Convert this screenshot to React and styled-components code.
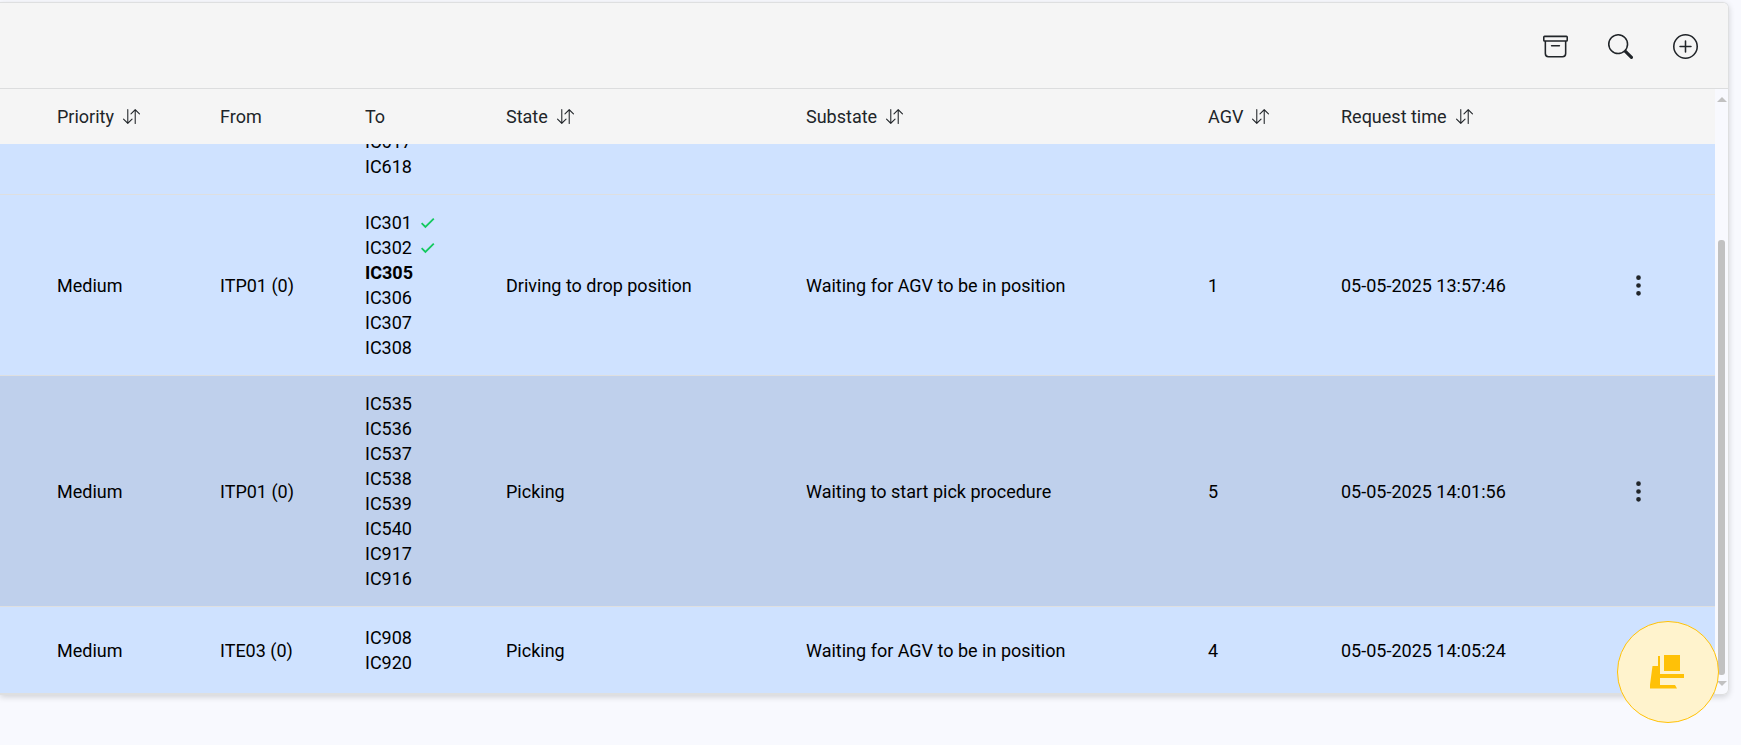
import React from "react";
import styled, { createGlobalStyle } from "styled-components";
import { BsArchive, BsSearch, BsPlusCircle, BsArrowDownUp, BsThreeDotsVertical } from "react-icons/bs";

const GlobalStyle = createGlobalStyle`
  *, *::before, *::after { box-sizing: border-box; }
  body {
    margin: 0;
    background: #f8f9fe;
    color: #212529;
    font-family: Roboto, "Liberation Sans", sans-serif;
    font-size: 18px;
    line-height: 25px;
  }
`;

const Page = styled.main`
  height: 100vh;
  padding: 2px 12px 50px 0;
  overflow: hidden;
`;

const Card = styled.section`
  display: flex;
  flex-direction: column;
  height: 100%;
  border: 1px solid #dedfe0;
  border-left: 0;
  border-radius: 0 6px 6px 0;
  box-shadow: 0 2px 6px rgba(0, 0, 0, 0.16);
  overflow: hidden;
`;

const Toolbar = styled.header`
  display: flex;
  justify-content: flex-end;
  align-items: center;
  flex: none;
  height: 86px;
  padding: 2px 10px 0 0;
  background: #f5f5f5;
  border-bottom: 1px solid #dcddde;
`;

const ToolButton = styled.button`
  display: flex;
  padding: 20px;
  border: 0;
  background: none;
  color: #212529;
  font-size: 25px;
  cursor: pointer;
`;

const Body = styled.div`
  display: flex;
  flex: 1;
  min-height: 0;
`;

const Viewport = styled.div`
  flex: 1;
  min-width: 0;
  overflow: hidden;
`;

const Table = styled.table`
  width: 100%;
  table-layout: fixed;
  border-collapse: separate;
  border-spacing: 0;
`;

const Col = styled.col`
  width: ${(p) => p.$width};
`;

const HeadCell = styled.th`
  position: sticky;
  top: 0;
  z-index: 1;
  height: 55px;
  padding: 0 0 0 57px;
  background: #f5f5f5;
  font-weight: 400;
  text-align: left;
  white-space: nowrap;
`;

const SortButton = styled.button`
  display: inline-flex;
  align-items: center;
  gap: 9px;
  padding: 0;
  border: 0;
  background: none;
  color: inherit;
  font: inherit;
  cursor: pointer;

  svg {
    width: 17px;
    height: 17px;
  }
`;

const Row = styled.tr`
  background: ${(p) => (p.$shaded ? "#bfd0ec" : "#cfe2ff")};
`;

const Cell = styled.td`
  padding: 15px 0 15px 57px;
  border-bottom: 1px solid #dedfe0;
  color: #000;
  vertical-align: middle;
  white-space: nowrap;
`;

const StopList = styled.ul`
  margin: 0;
  padding: 0;
  list-style: none;
`;

const Stop = styled.li`
  display: flex;
  align-items: center;
  gap: 9px;
  font-weight: ${(p) => (p.$current ? 700 : 400)};
`;

const MenuButton = styled.button`
  display: flex;
  align-items: center;
  justify-content: center;
  width: 56px;
  height: 56px;
  padding: 0;
  border: 0;
  background: none;
  color: #212529;
  font-size: 25px;
  cursor: pointer;
`;

const ScrollTrack = styled.div`
  display: flex;
  flex-direction: column;
  align-items: center;
  flex: none;
  width: 13px;
  padding: 8px 0;
`;

const ScrollArrow = styled.span`
  border: 5px solid transparent;
  border-top: ${(p) => (p.$down ? "5px solid #c1c1c1" : "0")};
  border-bottom: ${(p) => (p.$down ? "0" : "5px solid #c1c1c1")};
`;

const ScrollLane = styled.div`
  display: flex;
  flex-direction: column;
  justify-content: flex-end;
  flex: 1;
  padding-bottom: 6px;
`;

const ScrollThumb = styled.div`
  width: 7px;
  height: 76%;
  border-radius: 3px;
  background: #c1c1c1;
`;

const Fab = styled.button`
  position: fixed;
  right: 22px;
  bottom: 22px;
  z-index: 2;
  display: flex;
  align-items: center;
  justify-content: center;
  width: 102px;
  height: 102px;
  padding: 0;
  border: 1px solid #ffc107;
  border-radius: 50%;
  background: #fff3cd;
  color: #ffc107;
  cursor: pointer;
`;

const columns = [
  { label: "Priority", sortable: true, width: "163px" },
  { label: "From", width: "145px" },
  { label: "To", width: "141px" },
  { label: "State", sortable: true, width: "300px" },
  { label: "Substate", sortable: true, width: "auto" },
  { label: "AGV", sortable: true, width: "133px" },
  { label: "Request time", sortable: true, width: "269px" },
];

const orders = [
  {
    priority: "Medium",
    from: "ITP01 (0)",
    stops: ["IC301", "IC302", "IC305", "IC306", "IC307", "IC308"],
    done: 2,
    current: 2,
    state: "Driving to drop position",
    substate: "Waiting for AGV to be in position",
    agv: "1",
    time: "05-05-2025 13:57:46",
  },
  {
    priority: "Medium",
    from: "ITP01 (0)",
    stops: ["IC535", "IC536", "IC537", "IC538", "IC539", "IC540", "IC917", "IC916"],
    state: "Picking",
    substate: "Waiting to start pick procedure",
    agv: "5",
    time: "05-05-2025 14:01:56",
    shaded: true,
  },
  {
    priority: "Medium",
    from: "ITE03 (0)",
    stops: ["IC908", "IC920"],
    state: "Picking",
    substate: "Waiting for AGV to be in position",
    agv: "4",
    time: "05-05-2025 14:05:24",
  },
];

const CheckIcon = () => (
  <svg width="14" height="14" viewBox="0 0 14 14" fill="none" stroke="#14c95f" strokeWidth="1.8" role="img" aria-label="Done">
    <path d="M0.600 7.200 L4.400 11 L12.800 2.600" />
  </svg>
);

const ForkliftIcon = () => (
  <svg width="36" height="36" viewBox="1 0 36 36" fill="currentColor" aria-hidden="true">
    <path d="M15 1h16v16H15z" />
    <path d="M9 2h2v18h24v4H11v7h15l2 3.500H0.500L3.500 12H9z" />
  </svg>
);

function Stops({ stops, done = 0, current = -1 }) {
  return (
    <StopList>
      {stops.map((stop, i) => (
        <Stop key={stop} $current={i === current}>
          {stop}
          {i < done && <CheckIcon />}
        </Stop>
      ))}
    </StopList>
  );
}

export default function App() {
  const viewport = React.useRef(null);

  React.useLayoutEffect(() => {
    viewport.current.scrollTop = viewport.current.scrollHeight;
  }, []);

  return (
    <Page>
      <GlobalStyle />
      <Card>
        <Toolbar>
          <ToolButton type="button" aria-label="Archive"><BsArchive /></ToolButton>
          <ToolButton type="button" aria-label="Search"><BsSearch /></ToolButton>
          <ToolButton type="button" aria-label="Add"><BsPlusCircle /></ToolButton>
        </Toolbar>
        <Body>
          <Viewport ref={viewport}>
            <Table>
              <colgroup>
                {columns.map((c) => <Col key={c.label} $width={c.width} />)}
                <Col $width="162px" />
              </colgroup>
              <thead>
                <tr>
                  {columns.map((c) => (
                    <HeadCell key={c.label} scope="col">
                      {c.sortable ? (
                        <SortButton type="button">{c.label}<BsArrowDownUp /></SortButton>
                      ) : c.label}
                    </HeadCell>
                  ))}
                  <HeadCell as="td" />
                </tr>
              </thead>
              <tbody>
                <Row>
                  <Cell colSpan={2} />
                  <Cell><Stops stops={["IC617", "IC618"]} /></Cell>
                  <Cell colSpan={5} />
                </Row>
                {orders.map((o) => (
                  <Row key={o.time} $shaded={o.shaded}>
                    <Cell>{o.priority}</Cell>
                    <Cell>{o.from}</Cell>
                    <Cell><Stops stops={o.stops} done={o.done} current={o.current} /></Cell>
                    <Cell>{o.state}</Cell>
                    <Cell>{o.substate}</Cell>
                    <Cell>{o.agv}</Cell>
                    <Cell>{o.time}</Cell>
                    <Cell>
                      <MenuButton type="button" aria-label="Order actions"><BsThreeDotsVertical /></MenuButton>
                    </Cell>
                  </Row>
                ))}
              </tbody>
            </Table>
          </Viewport>
          <ScrollTrack aria-hidden="true">
            <ScrollArrow />
            <ScrollLane><ScrollThumb /></ScrollLane>
            <ScrollArrow $down />
          </ScrollTrack>
        </Body>
      </Card>
      <Fab type="button" aria-label="Vehicles"><ForkliftIcon /></Fab>
    </Page>
  );
}
